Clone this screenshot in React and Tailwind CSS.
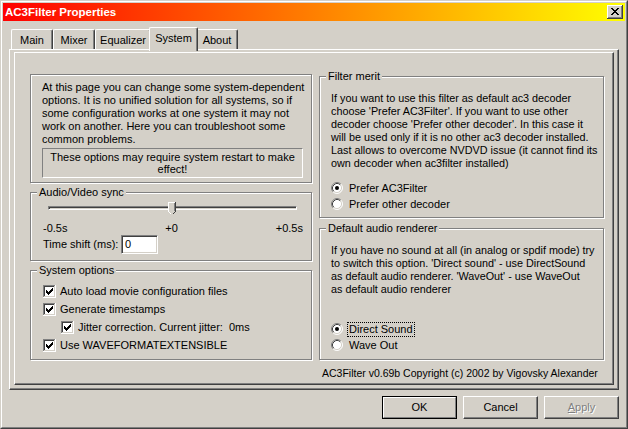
import React from 'react';

const CHECK = ['......X', '.....XX', 'X...XXX', 'XX.XXX.', 'XXXXX..', '.XXX...', '..X....'];
const CROSS = ['XX....XX', '.XX..XX.', '..XXXX..', '...XX...', '..XXXX..', '.XX..XX.', 'XX....XX'];

function Pixels({ rows, x = 0, y = 0, fill = '#000' }) {
    return rows.flatMap((row, j) =>
        row.split('').map((c, i) =>
            c === 'X' ? <rect key={`${i}-${j}`} x={x + i} y={y + j} width="1" height="1" fill={fill} /> : null
        )
    );
}

function CloseButton() {
    return (
        <svg width="16" height="14" viewBox="0 0 16 14" shapeRendering="crispEdges">
            <rect width="16" height="14" fill="#d4d0c8" />
            <path d="M0 0h15v1H1v12H0z" fill="#fff" />
            <path d="M15 0h1v14H0v-1h15z" fill="#404040" />
            <path d="M14 1h1v12H1v-1h13z" fill="#808080" />
            <Pixels rows={CROSS} x={4} y={3} />
        </svg>
    );
}

function CheckBox({ checked }) {
    return (
        <svg width="13" height="13" viewBox="0 0 13 13" shapeRendering="crispEdges" className="shrink-0">
            <rect width="13" height="13" fill="#fff" />
            <path d="M0 0h12v1H1v11H0z" fill="#808080" />
            <path d="M1 1h10v1H2v9H1z" fill="#404040" />
            <path d="M12 0h1v13H0v-1h12z" fill="#fff" />
            <path d="M11 1h1v11H1v-1h10z" fill="#d4d0c8" />
            {checked && <Pixels rows={CHECK} x={3} y={3} />}
        </svg>
    );
}

function Radio({ checked }) {
    return (
        <svg width="12" height="12" viewBox="0 0 12 12" className="shrink-0">
            <circle cx="6" cy="6" r="5" fill="#fff" />
            <path d="M2.11 9.89A5.5 5.5 0 0 1 9.89 2.11" stroke="#808080" fill="none" />
            <path d="M9.89 2.11A5.5 5.5 0 0 1 2.11 9.89" stroke="#fff" fill="none" />
            <path d="M2.82 9.18A4.5 4.5 0 0 1 9.18 2.82" stroke="#404040" fill="none" />
            <path d="M9.18 2.82A4.5 4.5 0 0 1 2.82 9.18" stroke="#d4d0c8" fill="none" />
            {checked && <circle cx="6" cy="6" r="2" fill="#000" />}
        </svg>
    );
}

function Thumb() {
    return (
        <svg width="8" height="13" viewBox="0 0 8 13" shapeRendering="crispEdges">
            <path d="M0 0h8v9l-4 4l-4-4z" fill="#d4d0c8" />
            <path d="M0 0h7v1H1v8H0z" fill="#fff" />
            <path d="M7 0h1v9H7z" fill="#404040" />
            <path d="M6 1h1v8H6z" fill="#808080" />
            <path d="M0.5 9.5L3.5 12.5" stroke="#fff" />
            <path d="M7.5 9.5L4.5 12.5" stroke="#404040" />
        </svg>
    );
}

function GroupBox({ title, className, children }) {
    return (
        <div className={`relative border border-[#808080] shadow-[inset_1px_1px_0_#fff,1px_1px_0_#fff] ${className}`}>
            <span className="absolute -top-[7px] left-[6px] bg-[#d4d0c8] px-[2px] text-[11px] leading-[13px] whitespace-nowrap">{title}</span>
            {children}
        </div>
    );
}

function Lines({ lines }) {
    return lines.map((l) => (
        <div key={l} className="leading-[13px] whitespace-nowrap">{l}</div>
    ));
}

function CheckRow({ label, indent }) {
    return (
        <div className={indent ? 'flex items-center h-[18px] pl-[30px]' : 'flex items-center h-[18px] pl-[12px]'}>
            <CheckBox checked />
            <span className="ml-[4px] leading-[13px] whitespace-pre">{label}</span>
        </div>
    );
}

function RadioRow({ label, checked, focused }) {
    return (
        <div className="flex items-center h-[16px] text-[11px]">
            <Radio checked={checked} />
            {focused ? (
                <span className="ml-[4px] border border-dotted border-black px-[1px] leading-[13px]">{label}</span>
            ) : (
                <span className="ml-[6px] leading-[13px]">{label}</span>
            )}
        </div>
    );
}

function Tab({ label, width, selected }) {
    if (selected) {
        return (
            <div className={`relative z-10 -mx-[2px] h-[24px] ${width} bg-[#d4d0c8] border-t border-l border-r border-t-white border-l-white border-r-[#404040] shadow-[inset_-1px_0_0_#808080] rounded-t-[2px] pt-[4px] text-center leading-[13px]`}>
                {label}
            </div>
        );
    }
    return (
        <div className={`mt-[2px] h-[20px] ${width} border-t border-l border-r border-t-white border-l-white border-r-[#404040] shadow-[inset_-1px_0_0_#808080] rounded-t-[2px] pt-[4px] text-center leading-[13px]`}>
            {label}
        </div>
    );
}

function Button({ children, primary, disabled }) {
    if (primary) {
        return (
            <button className="w-[75px] h-[23px] border border-black bg-[#d4d0c8] p-0">
                <div className="h-full flex items-center justify-center border border-t-white border-l-white border-r-[#808080] border-b-[#808080]">
                    {children}
                </div>
            </button>
        );
    }
    return (
        <button className={`w-[75px] h-[23px] flex items-center justify-center bg-[#d4d0c8] border border-t-white border-l-white border-r-[#404040] border-b-[#404040] shadow-[inset_-1px_-1px_0_#808080] ${disabled ? 'text-[#808080] [text-shadow:1px_1px_0_#fff]' : ''}`}>
            {children}
        </button>
    );
}

export default function App() {
    return (
        <div className="w-[628px] h-[429px] bg-[#d4d0c8] text-black text-[11px] font-['Liberation_Sans',Arial,sans-serif] border border-t-[#d4d0c8] border-l-[#d4d0c8] border-r-[#404040] border-b-[#404040]">
            <div className="h-full flex flex-col p-px border border-t-white border-l-white border-r-[#808080] border-b-[#808080]">
                {/* title bar */}
                <div className="h-[18px] shrink-0 flex items-center justify-between px-[2px] bg-[linear-gradient(to_right,#ff0000,#ffff00)]">
                    <span className="text-white font-bold text-[11.5px] leading-[14px]">AC3Filter Properties</span>
                    <CloseButton />
                </div>

                <div className="px-[6px] pt-[6px]">
                    <div className="flex h-[22px] pl-[2px]">
                        <Tab label="Main" width="w-[42px]" />
                        <Tab label="Mixer" width="w-[42px]" />
                        <Tab label="Equalizer" width="w-[56px]" />
                        <Tab label="System" width="w-[49px]" selected />
                        <Tab label="About" width="w-[42px]" />
                    </div>

                    <div className="h-[341px] border border-t-white border-l-white border-r-[#404040] border-b-[#404040] shadow-[inset_-1px_-1px_0_#808080] pt-[2px] px-[4px] pb-[4px]">
                        <div className="h-full flex gap-[7px] pl-[15px] pr-[9px] border border-t-white border-l-white border-r-[#404040] border-b-[#404040] shadow-[inset_-1px_-1px_0_#808080]">
                            {/* left column */}
                            <div className="w-[282px] shrink-0 pt-[21px]">
                                <div className="h-[109px] border border-[#808080] shadow-[inset_1px_1px_0_#fff,1px_1px_0_#fff] pt-[6px] pl-[11px] pr-[8px]">
                                    <Lines lines={[
                                        'At this page you can change some system-dependent',
                                        'options. It is no unified solution for all systems, so if',
                                        'some configuration works at one system it may not',
                                        'work on another. Here you can troubleshoot some',
                                        'common problems.',
                                    ]} />
                                    <div className="mt-[2px] h-[30px] border border-t-[#808080] border-l-[#808080] border-r-white border-b-white pt-[2px] text-center leading-[12px]">
                                        These options may require system restart to make<br />effect!
                                    </div>
                                </div>

                                <GroupBox title="Audio/Video sync" className="h-[69px] mt-[9px]">
                                    <div className="relative h-[14px] mt-[8px] ml-[17px] mr-[14px] pt-[5px]">
                                        <div className="h-[4px] border border-t-[#808080] border-l-[#808080] border-r-white border-b-white shadow-[inset_1px_1px_0_#404040]" />
                                        <div className="absolute top-[1px] left-[120px]">
                                            <Thumb />
                                        </div>
                                    </div>
                                    <div className="mt-[7px] flex justify-between pl-[12px] pr-[8px] leading-[13px]">
                                        <span>-0.5s</span>
                                        <span>+0</span>
                                        <span>+0.5s</span>
                                    </div>
                                    <div className="flex items-center h-[19px] pl-[12px]">
                                        <span className="w-[78px] leading-[13px]">Time shift (ms):</span>
                                        <div className="w-[37px] h-[19px] bg-white border border-t-[#808080] border-l-[#808080] border-r-white border-b-white shadow-[inset_1px_1px_0_#404040,inset_-1px_-1px_0_#d4d0c8] pl-[3px] pt-[2px] leading-[13px]">
                                            0
                                        </div>
                                    </div>
                                </GroupBox>

                                <GroupBox title="System options" className="h-[90px] mt-[9px] pt-[11px]">
                                    <CheckRow label="Auto load movie configuration files" />
                                    <CheckRow label="Generate timestamps" />
                                    <CheckRow label="Jitter correction. Current jitter:  0ms" indent />
                                    <CheckRow label="Use WAVEFORMATEXTENSIBLE" />
                                </GroupBox>
                            </div>

                            {/* right column */}
                            <div className="w-[285px] shrink-0 pt-[23px] text-[10.8px]">
                                <GroupBox title="Filter merit" className="h-[142px] pt-[15px] pl-[11px]">
                                    <Lines lines={[
                                        'If you want to use this filter as default ac3 decoder',
                                        "choose 'Prefer AC3Filter'. If you want to use other",
                                        "decoder choose 'Prefer other decoder'. In this case it",
                                        'will be used only if it is no other ac3 decoder installed.',
                                        'Last allows to overcome NVDVD issue (it cannot find its',
                                        'own decoder when ac3filter installed)',
                                    ]} />
                                    <div className="mt-[10px]">
                                        <RadioRow label="Prefer AC3Filter" checked />
                                        <RadioRow label="Prefer other decoder" />
                                    </div>
                                </GroupBox>

                                <GroupBox title="Default audio renderer" className="h-[132px] mt-[10px] pt-[15px] pl-[11px]">
                                    <Lines lines={[
                                        'If you have no sound at all (in analog or spdif mode) try',
                                        "to switch this option. 'Direct sound' - use DirectSound",
                                        "as default audio renderer. 'WaveOut' - use WaveOut",
                                        'as default audio renderer',
                                    ]} />
                                    <div className="mt-[25px]">
                                        <RadioRow label="Direct Sound" checked focused />
                                        <RadioRow label="Wave Out" />
                                    </div>
                                </GroupBox>

                                <div className="mt-[7px] pl-[3px] text-[10.5px] leading-[13px] whitespace-nowrap">
                                    AC3Filter v0.69b Copyright (c) 2002 by Vigovsky Alexander
                                </div>
                            </div>
                        </div>
                    </div>
                </div>

                <div className="flex justify-end gap-[6px] pr-[6px] mt-[6px]">
                    <Button primary>OK</Button>
                    <Button>Cancel</Button>
                    <Button disabled><span className="underline">A</span>pply</Button>
                </div>
            </div>
        </div>
    );
}
